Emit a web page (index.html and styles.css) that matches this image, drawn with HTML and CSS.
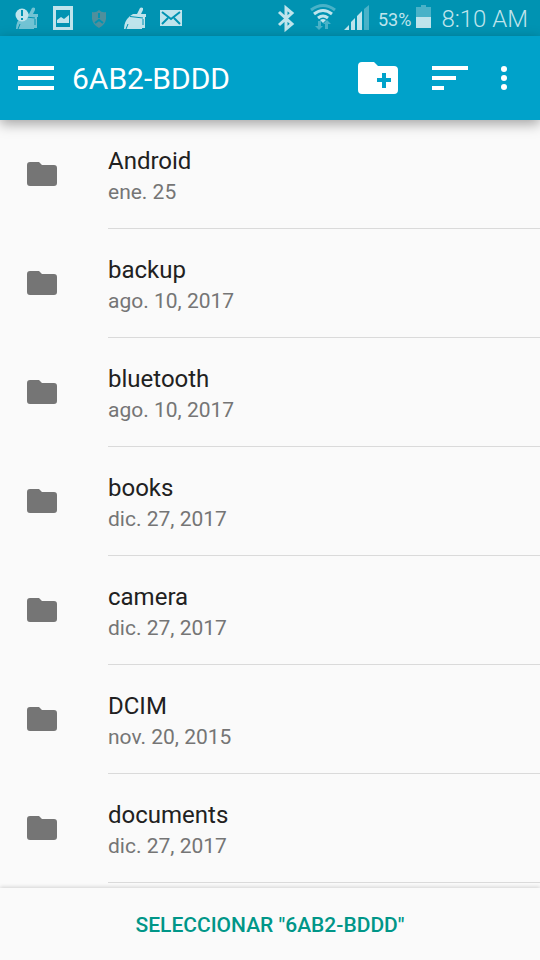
FILE: index.html
```html
<!DOCTYPE html>
<html lang="es">
<head>
<meta charset="utf-8">
<meta name="viewport" content="width=device-width, initial-scale=1">
<title>6AB2-BDDD</title>
<link rel="stylesheet" href="styles.css">
</head>
<body>
<svg class="defs" aria-hidden="true">
  <symbol id="folder" viewBox="0 0 30 24"><path d="M3 0h9l3 3h12a3 3 0 0 1 3 3v15a3 3 0 0 1-3 3H3a3 3 0 0 1-3-3V3a3 3 0 0 1 3-3z"/></symbol>
  <symbol id="broom" viewBox="0 0 24 36"><path d="M14 14 17 8q1-1 3 0v2l-2 4h5v3h-1v11h-3v1H1q0-8 6-13l3-2z"/><path class="cut" d="M7 16.500 20 18M20 19v6M5 24l-2 5"/></symbol>
</svg>
<div class="screen">
  <div class="status">
    <div class="notices">
      <svg class="icon" viewBox="0 0 24 36"><use href="#broom" width="24" height="36" opacity=".6"/><circle cx="7" cy="15" r="6.500"/><path class="mark" d="M7 10v6M7 18v2"/></svg>
      <svg class="icon" viewBox="0 0 24 36"><path fill-rule="evenodd" d="M2 6h20v24H2zM5 10v17h14V10z"/><path d="M6 23v-3l4-3 3 2 5-4v8z"/></svg>
      <svg class="icon shield" viewBox="0 0 24 36"><path d="M12 10q3 3 7 2v7q-1 6-7 9-6-3-7-9v-7q4 1 7-2z"/><path class="mark" d="M12 13v5M8 23l4-3 4 3"/></svg>
      <svg class="icon" viewBox="0 0 24 36"><use href="#broom" width="24" height="36"/></svg>
      <svg class="icon" viewBox="0 0 24 36"><path d="M1 10h22v16H1z"/><path class="line" d="m3 12 9 7 9-7M3 24l6-6M21 24l-6-6"/></svg>
    </div>
    <div class="system">
      <svg class="bluetooth" viewBox="0 0 28 36"><path d="m5 12 13 12-6 5V8l6 5L5 25"/></svg>
      <svg class="meter" viewBox="0 0 26 36"><g class="waves"><path class="faint" d="M1 10q12-9 24 0"/><path d="M4 14q9-7 18 0M8 18q5-4 10 0"/></g><path d="m10 20q3-2 6 0l-3 3z"/><path class="faint" d="M8 21h3v5h2l-4 4-4-4h3zM15 29v-5h-2l4-4 4 4h-3v5z"/></svg>
      <svg class="meter" viewBox="0 0 26 36"><path d="M0 30h5v-5zM7 22v8h4V18zM13 16v14h5V11z"/><path class="faint" d="M20 9v21h5V5z"/></svg>
      <span class="percent">53%</span>
      <svg class="battery" viewBox="0 0 15 36"><path class="faint" d="M0 7h5V5h5v2h5v10H0z"/><path d="M0 17h15v11H0z"/></svg>
      <span class="time">8:10 AM</span>
    </div>
  </div>
  <header class="bar">
    <button class="tool menu" aria-label="Menú"><svg viewBox="0 0 36 24"><path d="M0 0h36v4H0zM0 10h36v4H0zM0 20h36v4H0z"/></svg></button>
    <h1>6AB2-BDDD</h1>
    <button class="tool create" aria-label="Nueva carpeta"><svg viewBox="0 0 40 32"><path d="M4 0h12l4 4h16a4 4 0 0 1 4 4v20a4 4 0 0 1-4 4H4a4 4 0 0 1-4-4V4a4 4 0 0 1 4-4z"/><path class="plus" d="M26 11v15M19 18h14"/></svg></button>
    <button class="tool sort" aria-label="Ordenar"><svg viewBox="0 0 36 24"><path d="M0 0h36v4H0zM0 10h24v4H0zM0 20h12v4H0z"/></svg></button>
    <button class="tool more" aria-label="Más opciones"><svg viewBox="0 0 6 24"><circle cx="3" cy="3" r="3"/><circle cx="3" cy="12" r="3"/><circle cx="3" cy="21" r="3"/></svg></button>
  </header>
  <main>
    <ul class="files">
      <li><svg class="folder"><use href="#folder"/></svg><div class="info"><span class="name">Android</span><span class="date">ene. 25</span></div></li>
      <li><svg class="folder"><use href="#folder"/></svg><div class="info"><span class="name">backup</span><span class="date">ago. 10, 2017</span></div></li>
      <li><svg class="folder"><use href="#folder"/></svg><div class="info"><span class="name">bluetooth</span><span class="date">ago. 10, 2017</span></div></li>
      <li><svg class="folder"><use href="#folder"/></svg><div class="info"><span class="name">books</span><span class="date">dic. 27, 2017</span></div></li>
      <li><svg class="folder"><use href="#folder"/></svg><div class="info"><span class="name">camera</span><span class="date">dic. 27, 2017</span></div></li>
      <li><svg class="folder"><use href="#folder"/></svg><div class="info"><span class="name">DCIM</span><span class="date">nov. 20, 2015</span></div></li>
      <li><svg class="folder"><use href="#folder"/></svg><div class="info"><span class="name">documents</span><span class="date">dic. 27, 2017</span></div></li>
    </ul>
  </main>
  <footer><button class="select">SELECCIONAR "6AB2-BDDD"</button></footer>
</div>
</body>
</html>
```
FILE: styles.css
```css
* { box-sizing: border-box; }
body { margin: 0; background: #fafafa; font-family: Roboto, sans-serif; }
button { border: 0; padding: 0; background: none; font: inherit; color: inherit; }
svg { display: block; flex: none; fill: currentColor; }
.defs { position: absolute; width: 0; height: 0; }
.screen { display: flex; flex-direction: column; min-height: 100vh; }

.status { display: flex; justify-content: space-between; height: 36px; padding: 0 12px 0 15px; background: #0093b2; color: #bfe4ec; }
.notices { display: flex; gap: 12px; }
.icon { width: 24px; height: 36px; }
.cut, .mark, .line { fill: none; stroke: #0093b2; }
.cut { stroke-width: 1; }
.mark, .line { stroke-width: 2; }
.shield { color: #508f9c; }
.system { display: flex; align-items: center; }
.bluetooth { width: 28px; height: 36px; margin-right: 8px; fill: none; stroke: currentColor; stroke-width: 3; }
.meter { width: 26px; height: 36px; margin-right: 8px; }
.waves { fill: none; stroke: currentColor; stroke-width: 3; }
.faint { opacity: .38; }
.percent, .time { padding-top: 2px; }
.percent { font-size: 18px; }
.battery { width: 15px; height: 36px; margin: 0 10px 0 5px; }
.time { font-size: 24px; font-weight: 300; }

.bar { position: relative; display: flex; align-items: center; height: 84px; padding: 0 33px 0 18px; background: #00a2ca; color: #fff; box-shadow: 0 4px 12px rgba(0, 0, 0, .35); }
.bar h1 { flex: 1; margin: 0 0 0 18px; font-size: 30px; font-weight: 400; }
.menu svg, .sort svg { width: 36px; height: 24px; }
.create { margin-right: 34px; }
.create svg { width: 40px; height: 32px; }
.plus { fill: none; stroke: #00a2ca; stroke-width: 4; }
.sort { margin-right: 33px; }
.more svg { width: 6px; height: 24px; }

main { flex: 1; }
.files { margin: 0; padding: 0; list-style: none; }
.files li { display: flex; align-items: flex-start; padding-left: 27px; }
.folder { width: 30px; height: 24px; margin-top: 42px; color: #757575; }
.info { display: flex; flex: 1; flex-direction: column; margin-left: 51px; padding: 25px 0 21px; border-bottom: 1px solid #dadada; }
.name { font-size: 24px; line-height: 32px; color: #212121; }
.date { font-size: 21px; line-height: 30px; color: #757575; }

footer { display: flex; background: #fafafa; box-shadow: 0 -1px 4px rgba(0, 0, 0, .16); }
.select { flex: 1; height: 72px; padding-top: 2px; font-size: 21px; font-weight: 500; color: #009688; }
```
